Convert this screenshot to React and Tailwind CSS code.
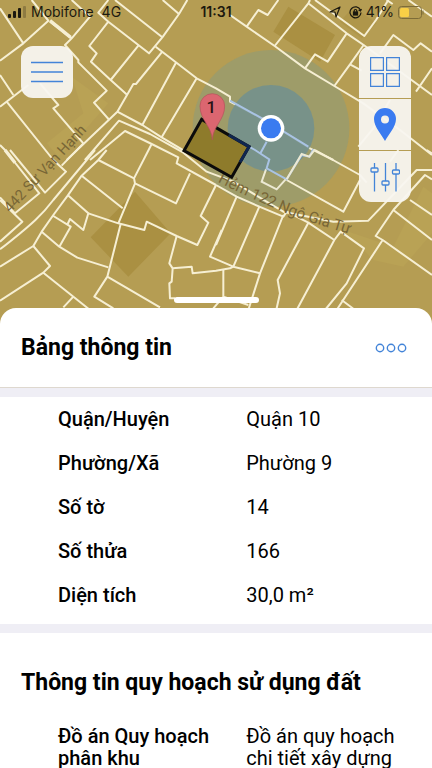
const parcelLines = [
  'M0 25L70 130L0 182M70 130L145 62L95 0M150 65L215 115L270 50L215 0M215 115L195 135L235 180V187L320 272L282 308L328 360',
  'M345 0L487 112L537 42L488 0M537 42L562 0M487 112L447 160L325 65L268 138L290 160L273 185L332 240L382 285M325 65L295 38L325 0M415 137L332 240',
  'M467 140L590 235L648 265L690 290V305L795 360L930 445L1000 480M487 155L408 252H400L352 335L200 480M527 190L427 375M590 235L485 412',
  'M352 335L427 375L485 412L552 452M255 480L357 362L450 402L550 458L620 515L700 545L850 635L1000 665L1105 662L1250 510H1296',
  'M270 480L375 393L455 432L535 472L530 490L648 555M455 432L402 535M250 430L160 325L175 315L120 250M0 320L85 255M0 225L40 285M20 305L160 480L198 515L135 578L30 450M250 430L185 497',
  'M0 435L15 450L118 580L45 640M0 600L67 665L0 725M0 592L45 640',
  'M690 45L740 80L824 138L915 205L1003 258L1090 310L1200 390L1296 465M740 80L775 30L803 45L835 0M824 138L925 10L1040 100L1091 135M925 10L930 0M945 0L1093 108L1128 60L1165 0',
  'M1040 100L983 185L945 163L915 205M1003 258L1050 193L1085 212M1050 193L1091 135L1296 285M1140 160L1180 105L1240 150L1262 130L1296 155M1248 275L1296 205M1225 0L1296 50M1160 0L1178 12M1170 300L1120 385L1075 440',
  'M285 450L160 600C130 640 100 670 0 748M270 465L255 480M320 450L295 480L245 527L203 587L160 645L125 695L100 738L0 800M203 585L265 640L250 690L210 657L203 672M160 648L212 680L178 740L125 695M178 740L232 773L325 802',
  'M265 640L355 670L433 690L440 665L530 708L592 735L625 668L602 648L648 555M245 527L368 625M295 480L402 535L405 550L355 670M405 550L528 610L570 520M362 672L322 830L283 890L340 925M322 830L480 922',
  'M530 708L508 790L518 805L575 800L578 820L648 812L690 805L700 800M518 805L515 845L508 850L510 895H525M0 902L130 818L150 798L100 738M130 818L270 930M190 922L220 890M665 690L630 770L700 800',
  'M648 555L710 590L778 620L850 650L860 635L925 668L1003 720L1022 695L1092 745L1040 850L975 930M710 590L648 735M778 620L700 800L780 820L850 645M780 820L745 930M925 668L833 840L840 880L830 925M1003 720L890 930M670 808V890L745 915M670 890L640 925',
  'M1296 720L1180 630L1127 708L1148 720L1296 825M1148 720L1010 930M1025 900L1065 930M1180 630L1275 525L1296 538M1230 600L1296 645M860 540L1030 635L1080 540M945 450L1080 525L1100 548M1195 450L1170 485M1280 450L1296 460',
]

const landInfo = [
  ['Quận/Huyện', 'Quận 10'],
  ['Phường/Xã', 'Phường 9'],
  ['Số tờ', '14'],
  ['Số thửa', '166'],
  ['Diện tích', '30,0 m²'],
]

const ParcelMap = () => (
  <svg
    className="absolute inset-0 h-full w-full"
    viewBox="0 0 1296 990"
    preserveAspectRatio="xMidYMin slice"
    aria-hidden="true"
  >
    <rect width="1296" height="990" fill="#b59d53" />
    <g fill="#aa9042">
      <path d="M405 575L512 700L385 830L272 712Z" />
      <path d="M865 20L1005 105L960 185L820 95Z" />
      <path d="M1060 20L1130 70L1085 115L1020 65Z" opacity=".5" />
    </g>
    <path d="M215 230L325 310L255 390L175 470L140 430L250 340Z" fill="#b9a255" />
    <path d="M1030 690L1180 740L1270 560L1296 580V700L1210 800L1120 780Z" fill="#b9a255" />

    <circle cx="813" cy="385" r="235" fill="#8a9a7c" opacity=".55" />
    <g fill="none" stroke="#f6efd3" strokeWidth="6" strokeLinejoin="round">
      {parcelLines.map((d) => (
        <path key={d} d={d} />
      ))}
      <path d="M150 62L212 112M15 450L45 488" strokeWidth="10" />
    </g>
    <circle cx="813" cy="385" r="130" fill="#71908f" opacity=".85" />
    <g fill="none" stroke="#a9c3e4" strokeWidth="6">
      <path d="M690 302L795 360L925 440M747 440L765 450L808 478L800 505L860 538L905 465L928 470L940 448M800 425L780 462" />
    </g>
    <path d="M798 508L785 545L830 568L857 538M860 538L905 462L928 470L945 448" fill="none" stroke="#ece9d3" strokeWidth="6" />

    <path id="alley" d="M652 545C740 590 800 615 860 640S980 680 1060 706" fill="none" />
    <g fill="#786636" fontFamily="Roboto, sans-serif">
      <text transform="translate(30 640) rotate(-47)" fontSize="44">442 Sư Vạn Hạnh</text>
      <text fontSize="46">
        <textPath href="#alley">Hẻm 122 Ngô Gia Tự</textPath>
      </text>
    </g>

    <path d="M605 358L747 440L695 532L552 452Z" fill="#8e7b2b" stroke="#0b0b0b" strokeWidth="9" />
    <path d="M686 405L747 440L720 487" fill="none" stroke="#10264f" strokeWidth="9" />
    <path
      d="M637 420C635 378 600 360 600 318A37 37 0 0 1 674 318C674 360 639 378 637 420Z"
      fill="#db6670"
      stroke="#b4525a"
      strokeWidth="2"
    />
    <text x="634" y="338" textAnchor="middle" fontFamily="Roboto, sans-serif" fontSize="50" fontWeight="500" fill="#2a1215">
      1
    </text>
    <circle cx="813" cy="385" r="40" fill="#fff" />
    <circle cx="813" cy="385" r="30" fill="#3a7bf0" />
  </svg>
)

const StatusBar = () => (
  <div className="grid h-6 grid-cols-3 items-center pl-2 pr-2 font-['Inter',sans-serif] text-sm text-[#1c190f]">
    <div className="flex items-center gap-1">
      <svg width="19" height="12" viewBox="0 0 19 12" fill="currentColor" aria-hidden="true">
        <rect y="8" width="3" height="4" rx="1" />
        <rect x="5" y="5" width="3" height="7" rx="1" />
        <rect x="10" y="2" width="3" height="10" rx="1" />
        <rect x="15" y="0" width="3" height="12" rx="1" opacity=".25" />
      </svg>
      <span>Mobifone</span>
      <span className="ml-1">4G</span>
    </div>
    <div className="text-center font-semibold">11:31</div>
    <div className="flex items-center justify-end gap-1">
      <svg width="12" height="12" viewBox="0 0 12 12" fill="none" stroke="currentColor" strokeWidth="1.2" strokeLinejoin="round" aria-hidden="true">
        <path d="M1 6L11 1L7 11L6 6Z" />
      </svg>
      <svg className="ml-1" width="13" height="13" viewBox="0 0 13 13" fill="none" stroke="currentColor" strokeWidth="1.2" aria-hidden="true">
        <path d="M11.5 4A5.5 5.5 0 1 0 12 6.5M12.5 3L11.5 5L9.5 4" />
        <rect x="4.5" y="6" width="4" height="3" fill="currentColor" />
        <path d="M5.2 6V4.8a1.3 1.3 0 0 1 2.6 0V6" />
      </svg>
      <span>41%</span>
      <svg width="26" height="13" viewBox="0 0 26 13" aria-hidden="true">
        <rect x=".5" y=".5" width="23" height="12" rx="3" fill="none" stroke="#7d6c38" />
        <rect x="2" y="2" width="9" height="9" rx="1.5" fill="#f8cf46" />
        <path d="M25 4.5v4" stroke="#7d6c38" />
      </svg>
    </div>
  </div>
)

const MapTools = () => (
  <div className="flex w-[52px] flex-col gap-px overflow-hidden rounded-xl text-[#4384d8]">
    <button type="button" aria-label="Lớp bản đồ" className="flex h-[52px] items-center justify-center bg-[#f8f6f0]/95">
      <svg width="30" height="30" viewBox="0 0 30 30" fill="none" stroke="currentColor" strokeWidth="1.2">
        <path d="M.6.6h12.8v12.8H.6zM16.6.6h12.8v12.8H16.6zM.6 16.6h12.8v12.8H.6zM16.6 16.6h12.8v12.8H16.6z" />
      </svg>
    </button>
    <button type="button" aria-label="Vị trí" className="flex h-[51px] items-center justify-center bg-[#f8f6f0]/95">
      <svg width="22" height="33" viewBox="0 0 22 33" fill="#3a7bf0">
        <path fillRule="evenodd" d="M11 0A11 11 0 0 0 0 11C0 19 8 27 11 33C14 27 22 19 22 11A11 11 0 0 0 11 0ZM11 7.5A4 4 0 1 1 11 15.5A4 4 0 0 1 11 7.5Z" />
      </svg>
    </button>
    <button type="button" aria-label="Bộ lọc" className="flex h-[51px] items-center justify-center bg-[#f8f6f0]/95">
      <svg width="30" height="30" viewBox="0 0 30 30" fill="none" stroke="currentColor" strokeWidth="1.3">
        <path d="M4.500 1V6M4.500 10V29.500M15.500 1V19M15.500 23V29.500M26 1V8M26 12V29.500" />
        <rect x="1" y="6" width="7" height="4" rx="1" />
        <rect x="12" y="19" width="7" height="4" rx="1" />
        <rect x="22.500" y="8" width="7" height="4" rx="1" />
      </svg>
    </button>
  </div>
)

const App = () => {
  return (
    <main className="flex h-screen flex-col overflow-hidden bg-white font-['Roboto',sans-serif] text-black">
      <header className="relative h-[330px] shrink-0">
        <ParcelMap />
        <div className="relative">
          <StatusBar />
          <div className="mt-[22px] flex items-start justify-between px-[21px]">
            <button
              type="button"
              aria-label="Menu"
              className="flex size-[52px] items-center justify-center rounded-xl bg-[#f8f6f0]/95 text-[#4384d8]"
            >
              <svg width="32" height="22" viewBox="0 0 32 22" stroke="currentColor" strokeWidth="1.5">
                <path d="M0 1.500H32M0 11H32M0 20.500H32" />
              </svg>
            </button>
            <MapTools />
          </div>
        </div>
      </header>

      <section className="relative -mt-[33px] flex min-h-0 flex-1 flex-col">
        <div className="mx-auto mb-[5px] h-[6px] w-[85px] shrink-0 rounded-full bg-white" />
        <div className="flex h-[79px] shrink-0 items-center justify-between rounded-t-2xl bg-white px-[21px]">
          <h1 className="text-[23px] leading-7 font-bold">Bảng thông tin</h1>
          <button type="button" aria-label="Thêm" className="mr-1 text-[#4384d8]">
            <svg width="32" height="10" viewBox="0 0 32 10" fill="none" stroke="currentColor" strokeWidth="1.4">
              <circle cx="5" cy="5" r="3.700" />
              <circle cx="16" cy="5" r="3.700" />
              <circle cx="27" cy="5" r="3.700" />
            </svg>
          </button>
        </div>

        <div className="min-h-0 flex-1 overflow-hidden bg-white">
          <div className="h-[10px] border-t border-[#ded8cf] bg-[#efeef5]" />
          <table className="mb-[7px] w-full table-fixed text-xl leading-[22px]">
            <tbody>
              {landInfo.map(([label, value]) => (
                <tr key={label} className="h-11">
                  <th scope="row" className="w-[57%] pl-[58px] text-left font-medium">{label}</th>
                  <td className="pr-5">{value}</td>
                </tr>
              ))}
            </tbody>
          </table>
          <div className="h-[9px] bg-[#efeef5]" />
          <h2 className="px-[21px] pt-9 text-[23px] leading-7 font-bold">Thông tin quy hoạch sử dụng đất</h2>
          <table className="mt-7 w-full table-fixed text-xl leading-[22px]">
            <tbody>
              <tr className="align-top">
                <th scope="row" className="w-[57%] pl-[58px] pr-5 text-left font-medium">Đồ án Quy hoạch phân khu</th>
                <td className="pr-5">Đồ án quy hoạch chi tiết xây dựng</td>
              </tr>
            </tbody>
          </table>
        </div>
      </section>
    </main>
  )
}

export default App
